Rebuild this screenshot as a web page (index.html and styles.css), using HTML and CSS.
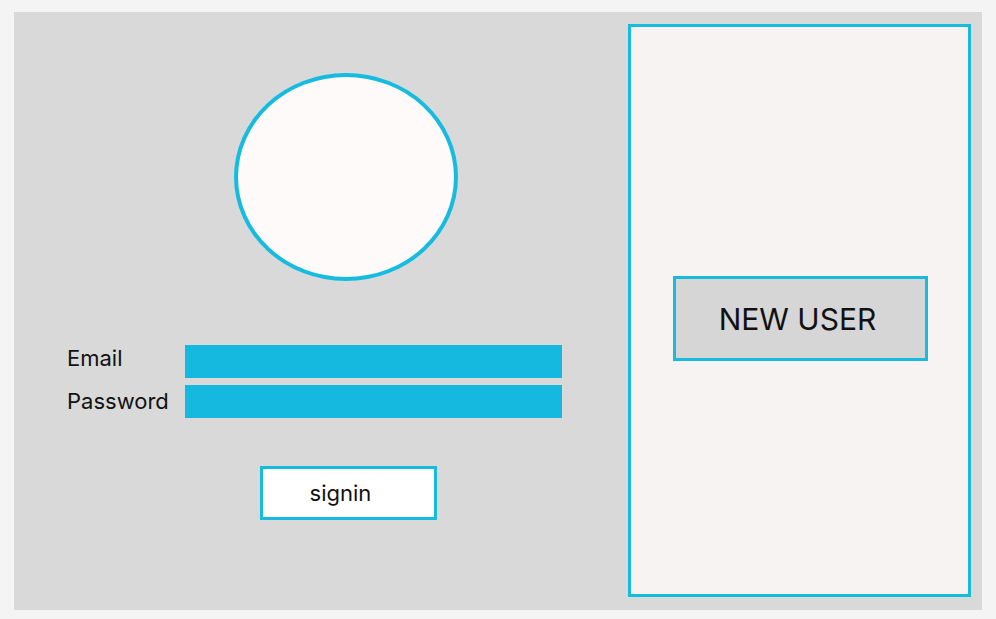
FILE: index.html
```html
<!DOCTYPE html>
<html lang="en">
<head>
    <meta charset="UTF-8">
    <meta name="viewport" content="width=device-width, initial-scale=1.0">
    <title>Sign in</title>
    <link rel="stylesheet" href="styles.css">
</head>
<body>

    <div class="frame">
        <div class="login">
            <div class="avatar"></div>

            <form class="fields">
                <label for="email" class="top">Email</label>
                <input type="text" id="email">

                <label for="password">Password</label>
                <input type="password" id="password">
            </form>

            <button type="button" class="signin">signin</button>
        </div>

        <div class="side">
            <button type="button" class="new-user">NEW USER</button>
        </div>
    </div>

</body>
</html>
```

FILE: styles.css
```css
body {
    margin: 0;
    padding: 12px 14px 9px 14px;
    background-color: #f4f4f4;
    font-family: Inter, "Liberation Sans", sans-serif;
}
.frame {
    display: flex;
    height: 598px;
    background-color: #d9d9d9;
}
.login {
    width: 614px;
    display: flex;
    flex-direction: column;
    align-items: flex-start;
}
.avatar {
    width: 216px;
    height: 200px;
    margin: 61px 0 0 220px;
    border: 4px solid #15bce0;
    border-radius: 50%;
    background-color: #fdfaf9;
}
.fields {
    display: grid;
    grid-template-columns: 118px 377px;
    row-gap: 7px;
    align-items: center;
    margin: 64px 0 0 53px;
}
label {
    font-size: 22px;
    color: #111;
    line-height: 33px;
}
label.top {
    align-self: start;
    line-height: 26px;
}
input {
    height: 33px;
    border: none;
    padding: 0;
    background-color: #15b9e0;
}
.signin {
    width: 177px;
    height: 54px;
    margin: 48px 0 0 246px;
    border: 3px solid #15bce0;
    background-color: #ffffff;
    font-family: inherit;
    font-size: 22px;
    color: #111;
    padding: 0 16px 0 0;
    cursor: pointer;
}
.side {
    width: 337px;
    height: 567px;
    margin: 12px 0 0 0;
    border: 3px solid #15bce0;
    background-color: #f7f3f2;
}
.new-user {
    width: 255px;
    height: 85px;
    margin: 249px 0 0 42px;
    border: 3px solid #15bce0;
    background-color: #d6d6d6;
    font-family: inherit;
    font-size: 30px;
    color: #111;
    padding: 0 6px 0 0;
    cursor: pointer;
}
```
